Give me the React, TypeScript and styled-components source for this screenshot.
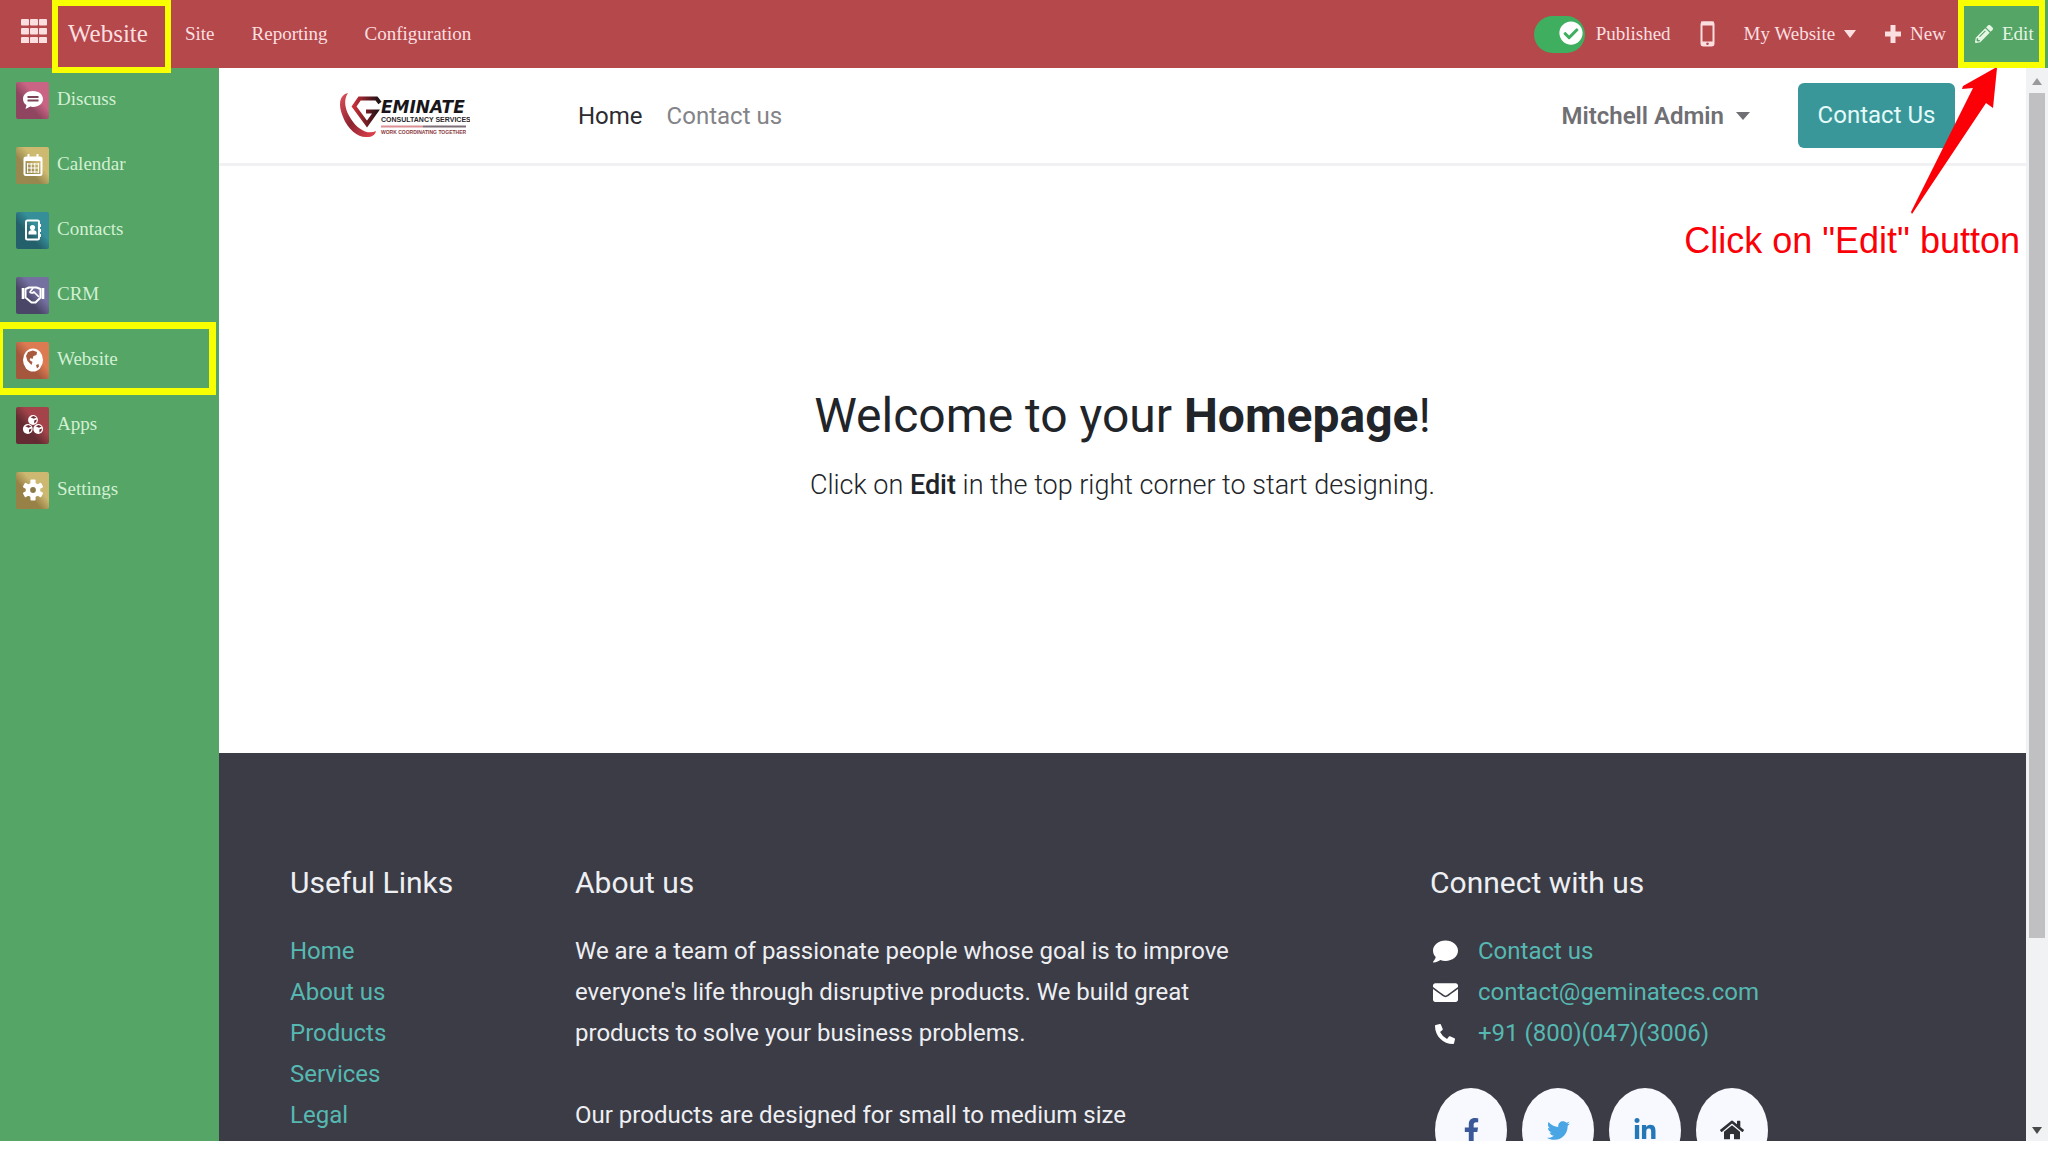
import React from "react";
import styled, { createGlobalStyle, css } from "styled-components";
import {
  FaCheckCircle,
  FaComment,
  FaEnvelope,
  FaFacebookF,
  FaHome,
  FaLinkedinIn,
  FaPencilAlt,
  FaPhoneAlt,
  FaTwitter,
} from "react-icons/fa";

const red = "#b5484b";
const green = "#54a566";
const yellow = "#f7ff00";
const serif = `"Liberation Serif", "Times New Roman", serif`;
const sans = `Roboto, "Liberation Sans", sans-serif`;

const GlobalStyle = createGlobalStyle`
  *, *::before, *::after { box-sizing: border-box; }
  body { margin: 0; background: #fff; font-family: ${sans}; }
  a { color: inherit; text-decoration: none; }
  button { font: inherit; color: inherit; background: none; border: 0; padding: 0; cursor: pointer; }
  ul { list-style: none; margin: 0; padding: 0; }
  h1, h2, p { margin: 0; font-weight: 400; }
`;

const Shell = styled.div`
  display: flex;
  flex-direction: column;
  height: 100vh;
  padding-bottom: 11px;
  overflow: hidden;
`;

const TopBar = styled.header`
  position: relative;
  z-index: 2;
  flex: none;
  display: flex;
  align-items: center;
  justify-content: space-between;
  height: 68px;
  background: ${red};
  color: #fbdfe0;
  font-family: ${serif};
  font-size: 19px;
  line-height: 24px;
`;

const BarGroup = styled.div<{ $gap: number }>`
  display: flex;
  align-items: center;
  align-self: stretch;
  gap: ${(p) => p.$gap}px;
`;

const AppsButton = styled.button`
  display: grid;
  margin: 0 5px 6px 20px;
`;

const Brand = styled.a`
  display: flex;
  align-items: center;
  align-self: flex-start;
  width: 119px;
  height: 73px;
  padding: 0 12px 6px 10px;
  border: 6px solid ${yellow};
  font-size: 25px;
`;

const Menu = styled.nav`
  display: flex;
  gap: 37px;
  padding-left: 14px;
`;

const PublishToggle = styled.label`
  display: flex;
  align-items: center;
  gap: 11px;
  cursor: pointer;
  input {
    position: absolute;
    opacity: 0;
  }
`;

const Track = styled.span`
  display: flex;
  align-items: center;
  justify-content: flex-end;
  width: 51px;
  height: 37px;
  padding: 0 2px 2px;
  border-radius: 19px;
  background: #3fae5f;
  color: #fff;
`;

const BarButton = styled.button<{ $gap: number }>`
  display: flex;
  align-items: center;
  gap: ${(p) => p.$gap}px;
`;

const EditZone = styled.div`
  display: flex;
  align-self: stretch;
  padding-right: 3px;
  background: ${green};
`;

const EditButton = styled(BarButton)`
  width: 87px;
  padding-left: 11px;
  border: 6px solid ${yellow};
  color: #e6f5e4;
`;

const Caret = styled.span<{ $w: number }>`
  border: ${(p) => p.$w}px solid transparent;
  border-top: 8px solid currentColor;
  border-bottom: 0;
`;

const Body = styled.div`
  flex: 1;
  display: flex;
  min-height: 0;
`;

const Sidebar = styled.nav`
  flex: none;
  width: 219px;
  background: ${green};
  color: #d3f0d3;
  font-family: ${serif};
  font-size: 19px;
  line-height: 24px;
`;

const SideLink = styled.a<{ $marked?: boolean }>`
  position: relative;
  display: flex;
  align-items: center;
  gap: 8px;
  height: 65px;
  padding: 0 16px 4px;
  ${(p) =>
    p.$marked &&
    css`
      &::after {
        content: "";
        position: absolute;
        inset: -6px 3px -2px -4px;
        border: 7px solid ${yellow};
      }
    `}
`;

const Tile = styled.span<{ $from: string; $to: string }>`
  display: grid;
  place-items: center;
  width: 33px;
  height: 37px;
  border-radius: 2px;
  color: #fff;
  background: linear-gradient(to top right, ${(p) => p.$to} 0 38%, ${(p) => p.$from} 62%);
  margin-top: 3px;
`;

const Page = styled.main`
  flex: 1;
  min-width: 0;
  display: flex;
  flex-direction: column;
  overflow: hidden;
`;

const SiteNav = styled.header`
  flex: none;
  display: flex;
  align-items: center;
  height: 98px;
  padding: 0 71px 0 119px;
  border-bottom: 3px solid #f1f0f3;
  font-size: 24px;
  line-height: 32px;
`;

const SiteLinks = styled.div`
  flex: 1;
  display: flex;
  gap: 24px;
  margin-left: 108px;
`;

const SiteLink = styled.a<{ $active?: boolean }>`
  color: ${(p) => (p.$active ? "#2b2b30" : "#838388")};
`;

const UserButton = styled.button`
  display: flex;
  align-items: center;
  gap: 12px;
  margin-right: 48px;
  color: #6f6f74;
  font-weight: 600;
`;

const ContactButton = styled.a`
  width: 157px;
  padding: 16px 0 17px;
  border-radius: 6px;
  background: #3a9799;
  color: #e4fbfa;
  text-align: center;
`;

const Hero = styled.section`
  flex: none;
  display: flex;
  flex-direction: column;
  align-items: center;
  padding: 220px 24px 245px;
  color: #212429;
`;

const Title = styled.h1`
  font-size: 48px;
  line-height: 60px;
`;

const Lead = styled.p`
  margin-top: 16px;
  font-size: 27px;
  line-height: 46px;
  font-weight: 300;
  b { font-weight: 500; }
`;

const Footer = styled.footer`
  flex: 1 0 auto;
  display: grid;
  grid-template-columns: 2fr 5fr 1fr 4fr;
  padding: 106px 26px 0 71px;
  background: #3b3c46;
  color: #eeeff2;
  font-size: 24px;
  line-height: 41px;
`;

const Column = styled.section<{ $start?: number }>`
  grid-column-start: ${(p) => p.$start ?? "auto"};
  padding-right: 45px;
`;

const ColumnTitle = styled.h2`
  margin-bottom: 24px;
  font-size: 30px;
  line-height: 48px;
`;

const LinkList = styled.ul`
  color: #56b8b1;
`;

const Paragraph = styled.p`
  margin-bottom: 41px;
`;

const ContactRow = styled.li`
  display: grid;
  grid-template-columns: 30px 1fr;
  align-items: center;
  gap: 18px;
  svg { color: #fff; justify-self: center; }
`;

const Socials = styled.div`
  display: flex;
  gap: 15px;
  height: 53px;
  margin: 34px 0 0 5px;
`;

const Social = styled.a<{ $color: string }>`
  flex: none;
  display: grid;
  place-items: center;
  width: 72px;
  height: 84px;
  border-radius: 50%;
  background: #f7f9fe;
  color: ${(p) => p.$color};
`;

const ScrollTrack = styled.div`
  flex: none;
  display: flex;
  flex-direction: column;
  align-items: center;
  width: 22px;
  padding: 10px 0 7px;
  background: #f1f2f3;
`;

const ScrollArrow = styled.span<{ $down?: boolean }>`
  border: 5px solid transparent;
  ${(p) =>
    p.$down
      ? "border-top: 7px solid #4a4a4a; border-bottom: 0; margin-top: auto;"
      : "border-bottom: 7px solid #9a9a9c; border-top: 0;"}
`;

const ScrollThumb = styled.span`
  width: 16px;
  height: 80%;
  margin-top: 8px;
  background: #c0c0c2;
`;

const Callout = styled.aside`
  position: absolute;
  z-index: 3;
  top: 68px;
  right: 28px;
  display: flex;
  flex-direction: column;
  align-items: flex-end;
  color: #fb0007;
  font-family: "Liberation Sans", Arial, sans-serif;
  font-size: 36px;
  line-height: 40px;
  pointer-events: none;
  svg { margin: 0 15px 7px 0; }
`;

const GridIcon = () => (
  <svg width="27" height="24" viewBox="0 0 27 24" fill="currentColor" aria-hidden="true">
    {[0, 9, 18].map((y) =>
      [0, 9, 18].map((x) => <rect key={`${x}-${y}`} x={x + 1} y={y} width="8" height="6.6" rx="1" />)
    )}
  </svg>
);

const PhoneIcon = () => (
  <svg width="15" height="26" viewBox="0 0 15 26" fill="none" aria-hidden="true">
    <rect x="1.5" y="1.5" width="12" height="23" rx="2" stroke="currentColor" strokeWidth="2" />
    <path d="M1 2.5h13M1 22.5h13" stroke="currentColor" strokeWidth="4" />
    <circle cx="7.5" cy="22.8" r="1.3" fill={red} />
  </svg>
);

const PlusIcon = () => (
  <svg width="16" height="18" viewBox="0 0 16 18" aria-hidden="true">
    <path d="M8 0v18M0 9h16" stroke="currentColor" strokeWidth="5" />
  </svg>
);

const BubbleIcon = () => (
  <svg width="22" height="22" viewBox="0 0 22 22" aria-hidden="true">
    <path d="M11 2C5 2 1 5.500 1 10c0 2.600 1.300 4.700 3.500 6.100L3.500 20l4.800-2.400c.9.200 1.800.3 2.700.3 6 0 10-3.500 10-7.900S17 2 11 2z" fill="#fff" />
    <path d="M5.500 8h11M5.500 11.500h11" stroke="#7c4456" strokeWidth="1.800" />
  </svg>
);

const CalendarIcon = () => (
  <svg width="20" height="24" viewBox="0 0 20 24" fill="none" stroke="#fff" aria-hidden="true">
    <rect x="1.500" y="4.500" width="17" height="17.500" rx="1.500" strokeWidth="2" />
    <path d="M1.500 6h17" strokeWidth="4" />
    <path d="M5.500 1v5M14.500 1v5" strokeWidth="2" />
    <path d="M4 11h12M4 15h12M4 19h12M4.600 10v10M8.200 10v10M11.800 10v10M15.400 10v10" strokeWidth="1" />
  </svg>
);

const BookIcon = () => (
  <svg width="18" height="22" viewBox="0 0 18 22" aria-hidden="true">
    <rect x="2" y="1.500" width="13" height="19" rx="1.500" fill="none" stroke="#fff" strokeWidth="2" />
    <path d="M16.500 5v3M16.500 10v3M16.500 15v3" stroke="#fff" strokeWidth="1" />
    <circle cx="8.500" cy="8.500" r="2.600" fill="#fff" />
    <path d="M4.500 15.500v-2q0-2.500 4-2.500t4 2.500v2z" fill="#fff" />
  </svg>
);

const HandshakeIcon = () => (
  <svg width="24" height="20" viewBox="0 0 24 20" fill="none" stroke="#fff" strokeWidth="2" strokeLinejoin="round" aria-hidden="true">
    <path d="M4.500 4L8 2.500h7.500L19.500 4v8.500l-5 5h-4l-6-5z" />
    <path d="M12 3l-3 4q1.500 2 4 0l5 5" strokeWidth="1.700" />
    <path d="M2 3v11M22 3v11" strokeWidth="2.600" />
  </svg>
);

const GlobeIcon = () => (
  <svg width="22" height="24" viewBox="0 0 22 24" aria-hidden="true">
    <ellipse cx="11" cy="12" rx="10" ry="11.500" fill="#fff" />
    <path d="M6 4l5-1.500 4 1.500-.5 3-3 1-1 3-2-1-1 2 3 2-1 3-4-4L4 8zM14 17l2.500-1 .5 2.500-2 2z" fill="#a85a3f" />
  </svg>
);

const CubesIcon = () => (
  <svg width="22" height="22" viewBox="0 0 22 22" aria-hidden="true">
    {[
      [11, 6],
      [5.8, 15],
      [16.2, 15],
    ].map(([x, y]) => (
      <g key={`${x}-${y}`} transform={`translate(${x} ${y})`}>
        <circle r="4.900" fill="#fff" />
        <path d="M-2.500-2.800L.5-4l3 1.400L.8-1.200zM1.200.6l2.600-1.200q.2 2.400-2.600 4z" fill="#6a2c33" />
      </g>
    ))}
  </svg>
);

const GearIcon = () => (
  <svg width="22" height="24" viewBox="-11 -12 22 24" aria-hidden="true">
    <circle r="7.300" fill="#fff" />
    {[0, 60, 120, 180, 240, 300].map((a) => (
      <rect key={a} x="-2.600" y="-10.500" width="5.200" height="6" rx="1" fill="#fff" transform={`rotate(${a})`} />
    ))}
    <circle r="2.900" fill="#8c7c4c" />
  </svg>
);

const Logo = () => (
  <svg width="132" height="50" viewBox="0 0 132 50" role="img" aria-label="Geminate Consultancy Services">
    <defs>
      <linearGradient id="swoosh" x1="0" y1="0" x2="1" y2="1">
        <stop offset="0" stopColor="#e0525c" />
        <stop offset="0.5" stopColor="#8d2330" />
        <stop offset="1" stopColor="#e8454f" />
      </linearGradient>
      <linearGradient id="gem" x1="0" y1="0" x2="1" y2="0">
        <stop offset="0" stopColor="#c8303a" />
        <stop offset="0.6" stopColor="#5d1a20" />
        <stop offset="1" stopColor="#171215" />
      </linearGradient>
    </defs>
    <path d="M10 2C1 4 0 14 5 26c5 13 16 21 24 20 5 0 8-2 9-6-8 4-18-1-25-12C7 19 5 9 10 2z" fill="url(#swoosh)" />
    <path
      d="M42 12L38.500 7.500H21.500L16 15.500L29 33L38 20.500H28"
      fill="none"
      stroke="url(#gem)"
      strokeWidth="4"
    />
    <text x="43" y="22" fontFamily="DejaVu Sans, sans-serif" fontWeight="700" fontSize="17" fontStyle="italic" fill="#18161a">
      EMINATE
    </text>
    <g fontFamily="Liberation Sans, Arial, sans-serif" fontWeight="700">
      <text x="43" y="31" fontSize="7" fill="#2a262a">CONSULTANCY SERVICES</text>
      <text x="43" y="43" fontSize="5" fill="#8c3a42">WORK COORDINATING TOGETHER</text>
    </g>
    <path d="M43 35.500h42" stroke="#dc8f95" strokeWidth="2" />
    <path d="M85 35.500h43" stroke="#7c7078" strokeWidth="2" />
  </svg>
);

const apps = [
  { name: "Discuss", from: "#c96484", to: "#8f4560", icon: <BubbleIcon /> },
  { name: "Calendar", from: "#cdb96f", to: "#98884f", icon: <CalendarIcon /> },
  { name: "Contacts", from: "#358e98", to: "#24606c", icon: <BookIcon /> },
  { name: "CRM", from: "#74709f", to: "#4a4668", icon: <HandshakeIcon /> },
  { name: "Website", from: "#dc7b52", to: "#a4573d", icon: <GlobeIcon />, marked: true },
  { name: "Apps", from: "#a5434a", to: "#642c32", icon: <CubesIcon /> },
  { name: "Settings", from: "#cdb872", to: "#988146", icon: <GearIcon /> },
];

const usefulLinks = ["Home", "About us", "Products", "Services", "Legal"];

export default function App() {
  return (
    <Shell>
      <GlobalStyle />
      <TopBar>
        <BarGroup $gap={0}>
          <AppsButton aria-label="Applications">
            <GridIcon />
          </AppsButton>
          <Brand href="#website">Website</Brand>
          <Menu>
            <a href="#site">Site</a>
            <a href="#reporting">Reporting</a>
            <a href="#configuration">Configuration</a>
          </Menu>
        </BarGroup>
        <BarGroup $gap={29}>
          <PublishToggle>
            <input type="checkbox" defaultChecked />
            <Track>
              <FaCheckCircle size={24} />
            </Track>
            Published
          </PublishToggle>
          <BarButton $gap={0} aria-label="Mobile preview">
            <PhoneIcon />
          </BarButton>
          <BarButton $gap={9}>
            My Website <Caret $w={6} />
          </BarButton>
          <BarGroup $gap={12}>
            <BarButton $gap={9}>
              <PlusIcon /> New
            </BarButton>
            <EditZone>
              <EditButton $gap={9}>
                <FaPencilAlt size={18} /> Edit
              </EditButton>
            </EditZone>
          </BarGroup>
        </BarGroup>
      </TopBar>
      <Body>
        <Sidebar aria-label="Applications">
          {apps.map((app) => (
            <SideLink key={app.name} href={`#${app.name.toLowerCase()}`} $marked={app.marked}>
              <Tile $from={app.from} $to={app.to}>
                {app.icon}
              </Tile>
              {app.name}
            </SideLink>
          ))}
        </Sidebar>
        <Page>
          <SiteNav>
            <Logo />
            <SiteLinks>
              <SiteLink href="#home" $active>
                Home
              </SiteLink>
              <SiteLink href="#contact">Contact us</SiteLink>
            </SiteLinks>
            <UserButton>
              Mitchell Admin <Caret $w={7} />
            </UserButton>
            <ContactButton href="#contact">Contact Us</ContactButton>
          </SiteNav>
          <Hero>
            <Title>
              Welcome to your <b>Homepage</b>!
            </Title>
            <Lead>
              Click on <b>Edit</b> in the top right corner to start designing.
            </Lead>
          </Hero>
          <Footer>
            <Column>
              <ColumnTitle>Useful Links</ColumnTitle>
              <LinkList>
                {usefulLinks.map((name) => (
                  <li key={name}>
                    <a href="#footer">{name}</a>
                  </li>
                ))}
              </LinkList>
            </Column>
            <Column>
              <ColumnTitle>About us</ColumnTitle>
              <Paragraph>
                We are a team of passionate people whose goal is to improve everyone's life through disruptive
                products. We build great products to solve your business problems.
              </Paragraph>
              <p>Our products are designed for small to medium size</p>
            </Column>
            <Column $start={4}>
              <ColumnTitle>Connect with us</ColumnTitle>
              <LinkList>
                <ContactRow>
                  <FaComment size={25} />
                  <a href="#contact">Contact us</a>
                </ContactRow>
                <ContactRow>
                  <FaEnvelope size={25} />
                  <a href="mailto:contact@geminatecs.com">contact@geminatecs.com</a>
                </ContactRow>
                <ContactRow>
                  <FaPhoneAlt size={20} />
                  <a href="tel:+918000473006">+91 (800)(047)(3006)</a>
                </ContactRow>
              </LinkList>
              <Socials>
                <Social href="#facebook" $color="#3b5998" aria-label="Facebook">
                  <FaFacebookF size={25} />
                </Social>
                <Social href="#twitter" $color="#4aa5e4" aria-label="Twitter">
                  <FaTwitter size={23} />
                </Social>
                <Social href="#linkedin" $color="#2578b8" aria-label="LinkedIn">
                  <FaLinkedinIn size={24} />
                </Social>
                <Social href="#home" $color="#2f3034" aria-label="Home">
                  <FaHome size={24} />
                </Social>
              </Socials>
            </Column>
          </Footer>
        </Page>
        <ScrollTrack aria-hidden="true">
          <ScrollArrow />
          <ScrollThumb />
          <ScrollArrow $down />
        </ScrollTrack>
      </Body>
      <Callout>
        <svg width="94" height="146" viewBox="0 0 94 146" fill="currentColor" aria-hidden="true">
          <path d="M84 0L86 0L82 40L75 35L1 146L0 144L62 20L51 21L52 18z" />
        </svg>
        Click on "Edit" button
      </Callout>
    </Shell>
  );
}
